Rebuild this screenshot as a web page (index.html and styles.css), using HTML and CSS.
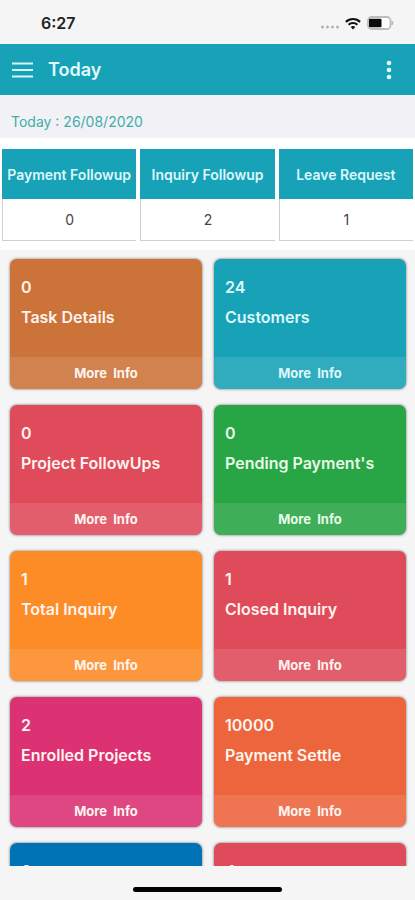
FILE: index.html
```html
<!DOCTYPE html>
<html lang="en">
<head>
<meta charset="utf-8">
<meta name="viewport" content="width=device-width, initial-scale=1">
<title>Today</title>
<link rel="stylesheet" href="styles.css">
</head>
<body>
<div class="status">
  <time class="clock">6:27</time>
  <div class="indicators">
    <svg width="20" height="4" viewBox="0 0 20 4" fill="#b4b4b4" aria-hidden="true"><circle cx="2.5" cy="2" r="1.5"/><circle cx="7.5" cy="2" r="1.5"/><circle cx="12.5" cy="2" r="1.5"/><circle cx="17.5" cy="2" r="1.5"/></svg>
    <svg class="wifi" width="16" height="13" viewBox="0 0 16 13" fill="none" stroke="#111" stroke-width="2.2" aria-hidden="true"><path d="M.9 4.9a10.1 10.1 0 0 1 14.2 0"/><path d="M3.6 7.8a6.3 6.3 0 0 1 8.8 0"/><path d="M8 12.6 5.7 10.1a3.3 3.3 0 0 1 4.6 0z" fill="#111" stroke="none"/></svg>
    <svg class="battery" width="27" height="14" viewBox="0 0 27 14" aria-hidden="true"><rect x="1" y="1" width="22.5" height="12" rx="3.5" fill="#fff" stroke="#bdbdbd" stroke-width="1.8"/><rect x="2" y="2.7" width="12.5" height="8.6" rx="1" fill="#0a0a0a"/><path d="M24.5 4.5c2.4.8 2.4 4.2 0 5z" fill="#b4b4b4"/></svg>
  </div>
</div>
<header class="appbar">
  <button class="icon-btn" type="button" aria-label="Menu"><svg width="21" height="16" viewBox="0 0 21 16" stroke="#d5f7fb" stroke-width="2.2"><path d="M0 1.5h21M0 8h21M0 14.5h21"/></svg></button>
  <h1>Today</h1>
  <button class="icon-btn more" type="button" aria-label="More options"><svg width="6" height="20" viewBox="0 0 6 20" fill="#e2fafc"><circle cx="3" cy="3" r="2.3"/><circle cx="3" cy="10" r="2.3"/><circle cx="3" cy="17" r="2.3"/></svg></button>
</header>
<p class="date">Today : 26/08/2020</p>
<section class="summary">
  <table>
    <thead><tr><th>Payment Followup</th><th>Inquiry Followup</th><th>Leave Request</th></tr></thead>
    <tbody><tr><td>0</td><td>2</td><td>1</td></tr></tbody>
  </table>
</section>
<main class="cards">
  <article class="card copper"><div class="info"><span>0</span><h2>Task Details</h2></div><a href="#">More&nbsp; Info</a></article>
  <article class="card teal"><div class="info"><span>24</span><h2>Customers</h2></div><a href="#">More&nbsp; Info</a></article>
  <article class="card red"><div class="info"><span>0</span><h2>Project FollowUps</h2></div><a href="#">More&nbsp; Info</a></article>
  <article class="card green"><div class="info"><span>0</span><h2>Pending Payment's</h2></div><a href="#">More&nbsp; Info</a></article>
  <article class="card orange"><div class="info"><span>1</span><h2>Total Inquiry</h2></div><a href="#">More&nbsp; Info</a></article>
  <article class="card red"><div class="info"><span>1</span><h2>Closed Inquiry</h2></div><a href="#">More&nbsp; Info</a></article>
  <article class="card pink"><div class="info"><span>2</span><h2>Enrolled Projects</h2></div><a href="#">More&nbsp; Info</a></article>
  <article class="card coral"><div class="info"><span>10000</span><h2>Payment Settle</h2></div><a href="#">More&nbsp; Info</a></article>
  <article class="card blue"><div class="info"><span>0</span></div></article>
  <article class="card red"><div class="info"><span>4</span></div></article>
</main>
<footer class="home"><div class="home-bar"></div></footer>
</body>
</html>
```
FILE: styles.css
```css
* { box-sizing: border-box; }

body {
  margin: 0;
  height: 100vh;
  display: flex;
  flex-direction: column;
  overflow: hidden;
  background: #f5f5f5;
  font-family: Inter, "Liberation Sans", sans-serif;
}

h1, h2, p { margin: 0; }

.status {
  flex: none;
  display: flex;
  justify-content: space-between;
  align-items: center;
  height: 44px;
  padding: 2px 21px 0 41px;
}

.clock {
  font-size: 16px;
  font-weight: 600;
  color: #222;
}

.indicators {
  display: flex;
  align-items: center;
}

.indicators svg:first-child { margin-top: 8px; }
.wifi { margin: 0 6px 0 5px; }

.appbar {
  flex: none;
  display: flex;
  align-items: center;
  height: 51px;
  padding: 0 23px 0 12px;
  background: #18a2b8;
  color: #e2fafc;
}

.appbar h1 {
  margin-left: 15px;
  font-size: 18px;
  font-weight: 600;
}

.icon-btn {
  display: flex;
  padding: 0;
  border: 0;
  background: none;
}

.more { margin-left: auto; }

.date {
  flex: none;
  height: 43px;
  padding: 0 11px;
  background: #f2f2f6;
  color: #3fada9;
  font-size: 14px;
  line-height: 54px;
}

.summary {
  flex: none;
  padding: 11px 0 9px;
  background: #fff;
  overflow: hidden;
}

.summary table {
  width: calc(100% + 4px);
  margin: 0 -2px;
  table-layout: fixed;
  border-spacing: 4px 0;
}

.summary th {
  height: 50px;
  padding: 0;
  background: #18a2b8;
  color: #dcf8fb;
  font-size: 14px;
  font-weight: 600;
  white-space: nowrap;
}

.summary td {
  height: 42px;
  padding: 0;
  border: solid #cfcfd2;
  border-width: 0 0 1px 1px;
  color: #444;
  font-size: 14px;
  text-align: center;
}

.cards {
  flex: 1;
  min-height: 0;
  overflow: hidden;
  display: grid;
  grid-template-columns: 1fr 1fr;
  grid-auto-rows: 130px;
  gap: 16px 12px;
  padding: 9px 9px 0 10px;
}

.card {
  display: flex;
  flex-direction: column;
  border-radius: 7px;
  overflow: hidden;
  box-shadow: 0 0 2px 1px #b3b3b3;
  color: #fff4ee;
}

.info {
  flex: 1;
  padding: 18px 11px 0;
  font-size: 16px;
  line-height: 20px;
  font-weight: 600;
}

.info span { display: block; }

.info h2 {
  margin-top: 10px;
  font-size: 16px;
  font-weight: 600;
  white-space: nowrap;
}

.card a {
  background: rgba(255, 255, 255, .11);
  color: inherit;
  font-size: 13px;
  font-weight: 700;
  line-height: 32px;
  text-align: center;
  text-decoration: none;
}

.copper { background: #cc733a; }
.teal { background: #18a2b8; color: #dcf8fb; }
.red { background: #df4b5b; }
.green { background: #28a544; color: #e8fbe9; }
.orange { background: #fd8b26; }
.pink { background: #dc3173; }
.coral { background: #ed653d; }
.blue { background: #0073b7; }

.home {
  flex: none;
  display: flex;
  justify-content: center;
  height: 34px;
  padding-top: 21px;
}

.home-bar {
  width: 36%;
  height: 5px;
  border-radius: 3px;
  background: #000;
}
```
